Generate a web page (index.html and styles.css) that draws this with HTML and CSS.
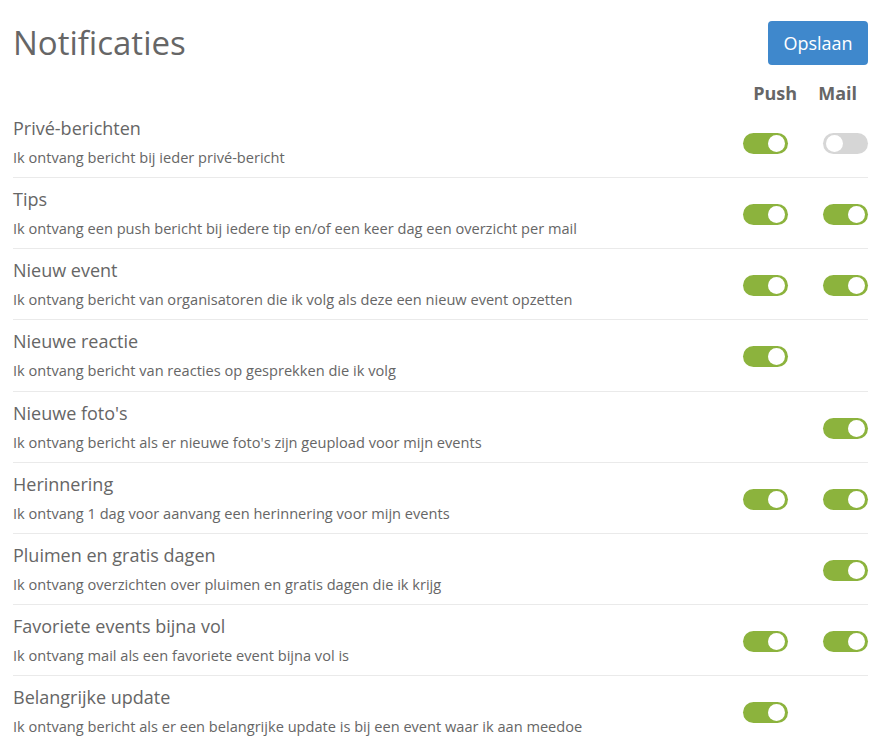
FILE: index.html
```html
<!DOCTYPE html>
<html lang="nl">
<head>
<meta charset="utf-8">
<title>Notificaties</title>
<link rel="stylesheet" href="styles.css">
</head>
<body>
<div class="page">
  <header class="top">
    <h1 class="title">Notificaties</h1>
    <button class="btn-save" type="button">Opslaan</button>
  </header>
  <div class="cols">
    <span class="col-push">Push</span>
    <span class="col-mail">Mail</span>
  </div>
  <ul class="list">
    <li class="row">
      <div class="text"><div class="name">Privé-berichten</div><div class="desc">Ik ontvang bericht bij ieder privé-bericht</div></div>
      <div class="cell"><span class="toggle on"></span></div>
      <div class="cell"><span class="toggle off"></span></div>
    </li>
    <li class="row">
      <div class="text"><div class="name">Tips</div><div class="desc">Ik ontvang een push bericht bij iedere tip en/of een keer dag een overzicht per mail</div></div>
      <div class="cell"><span class="toggle on"></span></div>
      <div class="cell"><span class="toggle on"></span></div>
    </li>
    <li class="row">
      <div class="text"><div class="name">Nieuw event</div><div class="desc">Ik ontvang bericht van organisatoren die ik volg als deze een nieuw event opzetten</div></div>
      <div class="cell"><span class="toggle on"></span></div>
      <div class="cell"><span class="toggle on"></span></div>
    </li>
    <li class="row">
      <div class="text"><div class="name">Nieuwe reactie</div><div class="desc">Ik ontvang bericht van reacties op gesprekken die ik volg</div></div>
      <div class="cell"><span class="toggle on"></span></div>
      <div class="cell"></div>
    </li>
    <li class="row">
      <div class="text"><div class="name">Nieuwe foto's</div><div class="desc">Ik ontvang bericht als er nieuwe foto's zijn geupload voor mijn events</div></div>
      <div class="cell"></div>
      <div class="cell"><span class="toggle on"></span></div>
    </li>
    <li class="row">
      <div class="text"><div class="name">Herinnering</div><div class="desc">Ik ontvang 1 dag voor aanvang een herinnering voor mijn events</div></div>
      <div class="cell"><span class="toggle on"></span></div>
      <div class="cell"><span class="toggle on"></span></div>
    </li>
    <li class="row">
      <div class="text"><div class="name">Pluimen en gratis dagen</div><div class="desc">Ik ontvang overzichten over pluimen en gratis dagen die ik krijg</div></div>
      <div class="cell"></div>
      <div class="cell"><span class="toggle on"></span></div>
    </li>
    <li class="row">
      <div class="text"><div class="name">Favoriete events bijna vol</div><div class="desc">Ik ontvang mail als een favoriete event bijna vol is</div></div>
      <div class="cell"><span class="toggle on"></span></div>
      <div class="cell"><span class="toggle on"></span></div>
    </li>
    <li class="row">
      <div class="text"><div class="name">Belangrijke update</div><div class="desc">Ik ontvang bericht als er een belangrijke update is bij een event waar ik aan meedoe</div></div>
      <div class="cell"><span class="toggle on"></span></div>
      <div class="cell"></div>
    </li>
  </ul>
</div>
</body>
</html>
```
FILE: styles.css
```css
* { box-sizing: border-box; }
html, body { margin: 0; padding: 0; background: #fff; }
body {
  font-family: "Open Sans", "Noto Sans", sans-serif;
  color: #666;
}
.page {
  padding: 21px 17px 0 13px;
}
.top {
  display: flex;
  justify-content: space-between;
  align-items: flex-start;
}
.title {
  margin: 0;
  font-size: 33px;
  font-weight: 400;
  line-height: 44px;
  color: #666;
}
.btn-save {
  width: 100px;
  height: 44px;
  border: 0;
  border-radius: 4px;
  background: #3f88cc;
  color: #fff;
  font-family: inherit;
  font-size: 18px;
  padding: 0;
}
.cols {
  display: flex;
  justify-content: flex-end;
  gap: 21px;
  padding-right: 11px;
  margin-top: 16px;
  margin-bottom: 2px;
  font-weight: 700;
  font-size: 18px;
  line-height: 24px;
  color: #666;
}
.list {
  list-style: none;
  margin: 0;
  padding: 0;
}
.row {
  display: flex;
  align-items: flex-start;
  height: 71.14px;
  border-bottom: 1px solid #eaeaea;
}
.row:last-child { border-bottom: 0; }
.text { flex: 1; padding-top: 9px; }
.name {
  font-size: 18px;
  line-height: 24px;
  color: #666;
}
.desc {
  font-size: 14.6px;
  line-height: 22px;
  margin-top: 6px;
  color: #666;
}
.cell {
  width: 45px;
  margin-top: 26px;
  display: flex;
  justify-content: center;
}
.cell + .cell { margin-left: 35px; }
.toggle {
  display: block;
  position: relative;
  width: 45px;
  height: 21px;
  border-radius: 11px;
}
.toggle::after {
  content: "";
  position: absolute;
  top: 2px;
  width: 17px;
  height: 17px;
  border-radius: 50%;
  background: #fff;
}
.toggle.on { background: #8cb33d; }
.toggle.on::after { right: 3px; }
.toggle.off { background: #d6d6d6; }
.toggle.off::after { left: 3px; }
```
